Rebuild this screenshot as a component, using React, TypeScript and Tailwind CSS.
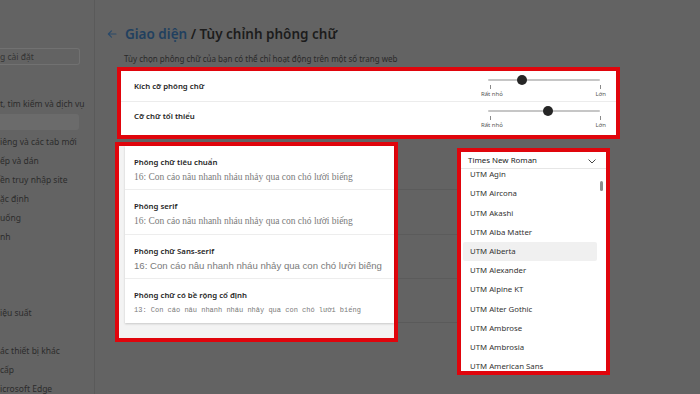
import React from "react";

const sidebarItems: { label: string; active?: boolean }[] = [
  { label: "t, tìm kiếm và dịch vụ" },
  { label: "", active: true },
  { label: "iêng và các tab mới" },
  { label: "ếp và dán" },
  { label: "ền truy nhập site" },
  { label: "ặc định" },
  { label: "uống" },
  { label: "nh" },
  { label: "" },
  { label: "" },
  { label: "" },
  { label: "iệu suất" },
  { label: "" },
  { label: "ác thiết bị khác" },
  { label: "cấp" },
  { label: "icrosoft Edge" },
];

const fontRows = [
  { title: "Phông chữ tiêu chuẩn", sample: "16: Con cáo nâu nhanh nháu nhảy qua con chó lười biếng", kind: "serif", h: "h-[44px]" },
  { title: "Phông serif", sample: "16: Con cáo nâu nhanh nháu nhảy qua con chó lười biếng", kind: "serif", h: "h-[45px]" },
  { title: "Phông chữ Sans-serif", sample: "16: Con cáo nâu nhanh nháu nhảy qua con chó lười biếng", kind: "sans", h: "h-[44px]" },
  { title: "Phông chữ có bề rộng cố định", sample: "13: Con cáo nâu nhanh nháu nhảy qua con chó lười biếng", kind: "mono", h: "h-[44px]" },
];

const fontOptions = [
  "UTM Agin",
  "UTM Aircona",
  "UTM Akashi",
  "UTM Alba Matter",
  "UTM Alberta",
  "UTM Alexander",
  "UTM Alpine KT",
  "UTM Alter Gothic",
  "UTM Ambrose",
  "UTM Ambrosia",
  "UTM American Sans",
];

const Slider: React.FC<{ pos: number }> = ({ pos }) => (
  <div className="flex w-[125px] flex-col">
    <div className="relative mx-[7px] mr-[6px] mt-[5px] h-[2px] rounded-full bg-[#c6c6c6]">
      <div
        className="absolute top-1/2 h-[10px] w-[10px] -translate-x-1/2 -translate-y-1/2 rounded-full bg-[#262626]"
        style={{ left: `${pos}%` }}
      ></div>
    </div>
    <div className="mt-[4px] flex justify-between px-[9px] pr-[5px]">
      <div className="h-[4px] w-px bg-[#8a8a8a]"></div>
      <div className="h-[4px] w-px bg-[#8a8a8a]"></div>
    </div>
    <div className="mt-[2px] flex justify-between text-[6px] leading-[7px] text-[#555]">
      <span>Rất nhỏ</span>
      <span>Lớn</span>
    </div>
  </div>
);

export default function App() {
  return (
    <div
      className="flex h-[394px] w-[700px] overflow-hidden bg-[#636363] text-[#222]"
      style={{ fontFamily: '"Noto Sans", "Open Sans", sans-serif' }}
    >
      {/* Sidebar (dimmed) */}
      <aside className="flex w-[95px] shrink-0 flex-col border-r border-[#5a5a5a] pt-[48px] text-[8.5px] text-[#2c2c2c]">
        <div className="flex h-[19px] w-[80px] items-center rounded-r-[3px] border border-l-0 border-[#717171] pt-[2px]">
          <span className="text-[#333]">g cài đặt</span>
        </div>
        <div className="mt-[30px] flex flex-col">
          {sidebarItems.map((item, i) => (
            <div key={i} className="flex h-[19px] items-center">
              {item.active ? (
                <div className="-mt-[3px] h-[16px] w-[79px] rounded-r-[3px] bg-[#6b6b6b]"></div>
              ) : (
                <span className="whitespace-nowrap">{item.label}</span>
              )}
            </div>
          ))}
        </div>
      </aside>

      {/* Main content */}
      <main className="flex flex-1 flex-col pl-[12px] pt-[25px]">
        <div className="flex h-[18px] items-center gap-[8px]">
          <svg width="10" height="10" viewBox="0 0 10 10" className="text-[#2a4a6a]">
            <path d="M9 5H1.5M4.5 1.8L1.3 5l3.2 3.2" fill="none" stroke="currentColor" strokeWidth="1.1" strokeLinecap="round" strokeLinejoin="round" />
          </svg>
          <h1 className="text-[13.5px] font-semibold text-[#1c1c1c]">
            <span className="text-[#21405f]">Giao diện</span> / Tùy chỉnh phông chữ
          </h1>
        </div>
        <p className="mt-[10px] pl-[17px] text-[8px] leading-[12px] text-[#2a2a2a]">
          Tùy chọn phông chữ của bạn có thể chỉ hoạt động trên một số trang web
        </p>

        {/* Font size settings (highlighted) */}
        <section className="ml-[10px] mt-[2px] w-[503px] border-[4px] border-[#e0050c] bg-white">
          <div className="flex h-[31px] items-center justify-between border-b border-[#ececec] pl-[13px] pr-[10px]">
            <span className="pt-[2px] text-[7.8px] font-semibold text-[#1e1e1e]">Kích cỡ phông chữ</span>
            <Slider pos={30} />
          </div>
          <div className="flex h-[30px] items-center justify-between pl-[13px] pr-[10px]">
            <span className="text-[7.8px] font-semibold text-[#1e1e1e]">Cỡ chữ tối thiểu</span>
            <Slider pos={54} />
          </div>
          <div className="h-[3px]"></div>
        </section>

        <div className="mt-[3px] flex items-start">
          {/* Font families (highlighted) */}
          <section className="ml-[8px] w-[283px] border-[4px] border-[#e0050c] bg-[#f3f3f3] pb-[15px] pl-[6px]">
            <div className="bg-white shadow-[0_1px_2px_rgba(0,0,0,0.18)]">
              {fontRows.map((row, i) => (
                <div
                  key={row.title}
                  className={`flex ${row.h} flex-col pl-[9px] pt-[10px] ${i < fontRows.length - 1 ? "border-b border-[#ededed]" : ""}`}
                >
                  <span className="text-[7.8px] font-semibold leading-[12px] text-[#1e1e1e]">{row.title}</span>
                  {row.kind === "serif" && (
                    <span
                      className="mt-[2px] whitespace-nowrap text-[9.5px] leading-[14px] text-[#7a7a7a]"
                      style={{ fontFamily: '"Liberation Serif", serif' }}
                    >
                      {row.sample}
                    </span>
                  )}
                  {row.kind === "sans" && (
                    <span
                      className="mt-[2px] whitespace-nowrap text-[9.6px] leading-[14px] text-[#7a7a7a]"
                      style={{ fontFamily: '"Liberation Sans", sans-serif' }}
                    >
                      {row.sample}
                    </span>
                  )}
                  {row.kind === "mono" && (
                    <span
                      className="mt-[2px] whitespace-nowrap text-[7px] leading-[14px] text-[#7a7a7a]"
                      style={{ fontFamily: '"Liberation Mono", monospace' }}
                    >
                      {row.sample}
                    </span>
                  )}
                </div>
              ))}
            </div>
          </section>

          {/* Dimmed card continuation */}
          <div className="mt-[4px] flex w-[59px] flex-col">
            <div className="h-[44px] border-b border-[#5b5b5b]"></div>
            <div className="h-[45px] border-b border-[#5b5b5b]"></div>
            <div className="h-[44px] border-b border-[#5b5b5b]"></div>
            <div className="h-[44px] border-b border-[#5a5a5a]"></div>
          </div>

          {/* Font dropdown (highlighted) */}
          <section className="mt-[6px] w-[153px] border-[4px] border-[#e0050c] bg-white">
            <div className="flex h-[17px] items-center justify-between border-b border-[#e6e6e6] pl-[7px] pr-[10px] pt-[2px]">
              <span className="text-[7.9px] text-[#222]">Times New Roman</span>
              <svg width="8" height="5" viewBox="0 0 8 5">
                <path d="M0.8 0.8L4 4l3.2-3.2" fill="none" stroke="#333" strokeWidth="0.9" strokeLinecap="round" strokeLinejoin="round" />
              </svg>
            </div>
            <div className="relative h-[202px] overflow-hidden">
              <div className="-mt-[4px] flex flex-col">
                {fontOptions.map((name) => (
                  <div
                    key={name}
                    className={`mx-[2px] mr-[9px] flex h-[19.2px] items-center rounded-[2px] pl-[7px] pt-[1px] text-[7.8px] text-[#333] ${name === "UTM Alberta" ? "bg-[#f0f0f0]" : ""}`}
                  >
                    {name}
                  </div>
                ))}
              </div>
              <div className="absolute right-[3px] top-[12px] h-[10px] w-[3px] rounded-full bg-[#8c8c8c]"></div>
            </div>
          </section>
        </div>
      </main>
    </div>
  );
}
